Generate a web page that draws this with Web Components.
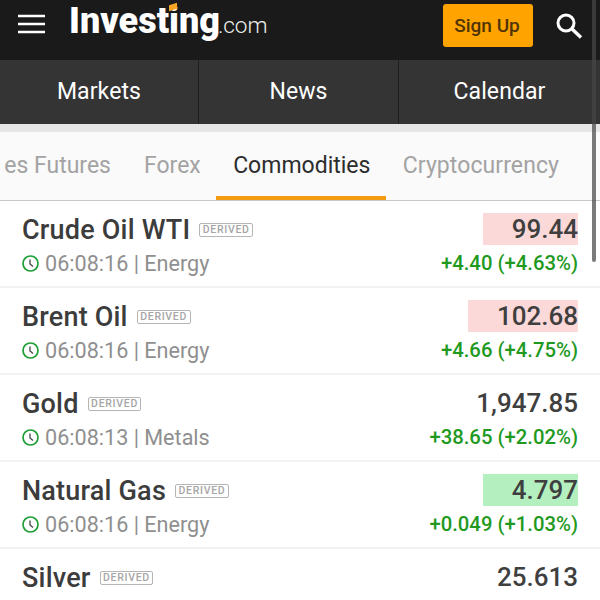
<!DOCTYPE html>
<html>
<head>
<meta charset="utf-8">
<style>
html, body { margin: 0; padding: 0; background: #fff; }
body { width: 600px; height: 600px; overflow: hidden; position: relative; font-family: Roboto, "Liberation Sans", sans-serif; }
.scrollbar { position: absolute; left: 592px; top: 0; width: 4px; height: 262px; background: rgba(70,70,70,.72); border-radius: 0 0 2px 2px; }
</style>
</head>
<body>
<site-header></site-header>
<main-nav></main-nav>
<market-tabs></market-tabs>
<quote-row name="Crude Oil WTI" time="06:08:16" group="Energy" price="99.44" change="+4.40 (+4.63%)" flash="down"></quote-row>
<quote-row name="Brent Oil" time="06:08:16" group="Energy" price="102.68" change="+4.66 (+4.75%)" flash="down"></quote-row>
<quote-row name="Gold" time="06:08:13" group="Metals" price="1,947.85" change="+38.65 (+2.02%)"></quote-row>
<quote-row name="Natural Gas" time="06:08:16" group="Energy" price="4.797" change="+0.049 (+1.03%)" flash="up"></quote-row>
<quote-row name="Silver" price="25.613"></quote-row>
<div class="scrollbar"></div>
<script>
class SiteHeader extends HTMLElement {
    constructor() {
        super()
        this.attachShadow({ mode: "open" }).innerHTML = `<style>
        :host { display: flex; align-items: center; height: 60px; background: #1a1a1a; color: #fff; padding-left: 18px; box-sizing: border-box; }
        .menu { width: 27px; height: 20px; flex: none; margin-top: -12px; }
        .logo { position: relative; margin-left: 24px; margin-top: -12px; white-space: nowrap; line-height: 40px; }
        .logo b { font: 900 36px Roboto, sans-serif; letter-spacing: 0; }
        .logo span { font: 300 22.600px Roboto, sans-serif; letter-spacing: -.1px; margin-left: -2px; color: #eee; }
        .logo i { position: absolute; left: 100px; top: 4px; width: 8px; height: 6px; background: #f5a623; transform: skewY(-18deg); }
        button { margin-left: auto; width: 90px; height: 43px; margin-top: -9px; border: 0; border-radius: 3px; background: #ffa300; color: #4f3405; font: 500 19px Roboto, sans-serif; padding: 0 2px 0 0; }
        svg.search { width: 28px; height: 28px; flex: none; margin: -8px 17px 0 22px; }
        </style>
        <svg class="menu" viewBox="0 0 27 20"><path d="M0 2h27M0 10h27M0 18h27" stroke="#fff" stroke-width="2.600" fill="none"/></svg>
        <div class="logo"><b>Investing</b><span>.com</span><i></i></div>
        <button>Sign Up</button>
        <svg class="search" viewBox="0 0 28 28"><circle cx="11" cy="11" r="8" stroke="#fff" stroke-width="3" fill="none"/><path d="M17 17l9 8.500" stroke="#fff" stroke-width="3.400" fill="none"/></svg>`
    }
}
customElements.define('site-header', SiteHeader)

class MainNav extends HTMLElement {
    constructor() {
        super()
        this.attachShadow({ mode: "open" }).innerHTML = `<style>
        :host { display: grid; grid-template-columns: 198px 200px 202px; height: 64px; background: #343434; color: #fff; border-bottom: 8px solid #e6e6e6; font: 400 23px Roboto, sans-serif; letter-spacing: .1px; }
        div { display: flex; align-items: center; justify-content: center; padding-bottom: 2px; box-sizing: border-box; }
        div + div { border-left: 1px solid #1f1f1f; }
        </style>
        <div>Markets</div><div>News</div><div>Calendar</div>`
    }
}
customElements.define('main-nav', MainNav)

class MarketTabs extends HTMLElement {
    constructor() {
        super()
        this.attachShadow({ mode: "open" }).innerHTML = `<style>
        :host { display: flex; height: 69px; box-sizing: border-box; background: #fafafa; border-bottom: 1px solid #c8c8c8; color: #a3a3a3; font: 400 23px Roboto, sans-serif; overflow: hidden; }
        span { display: flex; align-items: center; height: 68px; box-sizing: border-box; padding-bottom: 2px; white-space: nowrap; flex: none; }
        .first { margin-left: 7px; width: 104px; justify-content: flex-end; }
        .first s { text-decoration: none; flex: none; }
        .forex { margin-left: 33px; }
        .active { margin-left: 15px; padding: 4px 16px 2px 18px; width: 170px; justify-content: center; color: #2d2d2d; border-bottom: 4px solid #f39c12; }
        .crypto { margin-left: 17px; letter-spacing: .08px; }
        </style>
        <span class="first"><s>es Futures</s></span>
        <span class="forex">Forex</span>
        <span class="active">Commodities</span>
        <span class="crypto">Cryptocurrency</span>`
    }
}
customElements.define('market-tabs', MarketTabs)

class QuoteRow extends HTMLElement {
    constructor() {
        super()
        this.attachShadow({ mode: "open" })
    }
    connectedCallback() {
        let name = this.getAttribute('name')
        let time = this.getAttribute('time')
        let group = this.getAttribute('group')
        let price = this.getAttribute('price')
        let change = this.getAttribute('change')
        let flash = this.getAttribute('flash')
        this.shadowRoot.innerHTML = `<style>
        :host { display: flex; justify-content: space-between; height: 87px; box-sizing: border-box; padding: 12px 22px 0; border-bottom: 2px solid #f2f2f2; background: #fff; }
        .left, .right { display: flex; flex-direction: column; }
        .right { align-items: flex-end; }
        .top { display: flex; align-items: center; height: 34px; }
        .name { font: 500 27px Roboto, sans-serif; letter-spacing: .2px; color: #3c3c3c; white-space: nowrap; }
        .tag { margin-left: 9px; border: 1.500px solid #b5b5b5; border-radius: 2px; padding: 0 2.500px; height: 12px; font: 500 10.500px/12px Roboto, sans-serif; letter-spacing: .7px; color: #a6a6a6; }
        .sub { display: flex; align-items: center; margin-top: 4px; font: 400 21.600px Roboto, sans-serif; color: #8f8f8f; white-space: nowrap; }
        .sub svg { width: 17px; height: 17px; margin-right: 6px; flex: none; }
        .price { height: 32px; font: 500 26px/32px Roboto, sans-serif; color: #3f3f3f; }
        .price.down { background: #fcd9d9; padding-left: 29px; }
        .price.up { background: #b4efc0; padding-left: 29px; }
        .change { margin-top: 6px; font: 500 20.300px Roboto, sans-serif; color: #1f9a1f; white-space: nowrap; }
        </style>
        <div class="left">
            <div class="top"><span class="name">${name}</span><span class="tag">DERIVED</span></div>
            ${time ? `<div class="sub"><svg viewBox="0 0 17 17"><circle cx="8.500" cy="8.500" r="7.500" stroke="#1e9e35" stroke-width="1.700" fill="none"/><path d="M8 4.500v4.500l3 2.500" stroke="#444" stroke-width="1.300" fill="none"/></svg>${time} | ${group}</div>` : ''}
        </div>
        <div class="right">
            <div class="price ${flash || ''}">${price}</div>
            ${change ? `<div class="change">${change}</div>` : ''}
        </div>`
    }
}
customElements.define('quote-row', QuoteRow)
</script>
</body>
</html>
